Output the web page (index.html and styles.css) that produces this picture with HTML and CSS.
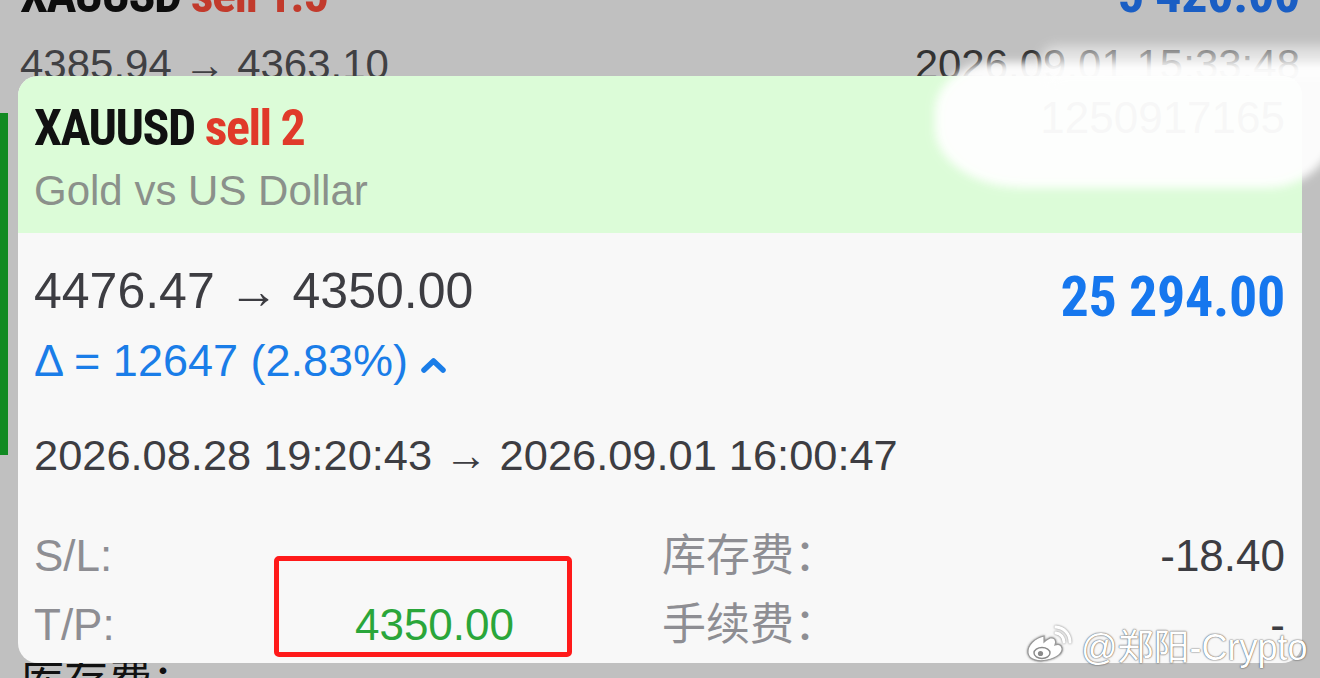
FILE: index.html
```html
<!DOCTYPE html>
<html lang="zh-CN">
<head>
    <meta charset="UTF-8">
    <meta name="viewport" content="width=device-width, initial-scale=1.0">
    <title>XAUUSD sell 2</title>
    <link rel="stylesheet" href="styles.css">
</head>
<body>
    <div class="list">
        <div class="row row-title">
            <span class="symbol">XAUUSD <span class="sell">sell 1.5</span></span>
            <span class="profit">5 420.00</span>
        </div>
        <div class="row row-price">
            <span>4385.94 → 4363.10</span>
            <span>2026.09.01 15:33:48</span>
        </div>
        <div class="mark"></div>
        <div class="row row-fee">
            <span>库存费：</span>
        </div>
    </div>

    <div class="card">
        <div class="card-head">
            <div>
                <div class="title">XAUUSD <span class="sell">sell 2</span></div>
                <div class="subtitle">Gold vs US Dollar</div>
            </div>
            <div class="ticket">1250917165</div>
        </div>
        <div class="card-body">
            <div class="price-row">
                <div class="price">4476.47 → 4350.00</div>
                <div class="amount">25 294.00</div>
            </div>
            <div class="delta">Δ = 12647 (2.83%)<svg class="chevron" width="27" height="17" viewBox="0 0 27 17"><polyline points="4,13 13.5,4 23,13" fill="none" stroke="#1a7de8" stroke-width="5.5" stroke-linecap="round" stroke-linejoin="round"/></svg></div>
            <div class="dates">2026.08.28 19:20:43 → 2026.09.01 16:00:47</div>
            <div class="fields">
                <div class="field"><span class="label">S/L:</span><span class="value">-</span></div>
                <div class="field"><span class="label cjk">库存费：</span><span class="value">-18.40</span></div>
                <div class="field"><span class="label">T/P:</span><span class="value tp">4350.00</span></div>
                <div class="field"><span class="label cjk">手续费：</span><span class="value">-</span></div>
            </div>
        </div>
    </div>

    <div class="smudge"></div>
    <div class="smudge-top"></div>
    <div class="highlight"></div>

    <div class="watermark">
        <svg width="48" height="38" viewBox="0 0 48 38">
            <path d="M19 11 C10 13 2 20 3 28 C4 35 14 37 22 35 C32 33 38 28 37 23 C36 19 33 19 30 20 C32 15 29 12 25 13 C23 14 21 15 19 17 Z" fill="#fff" stroke="#9a9a9a" stroke-width="1.2"/>
            <ellipse cx="17" cy="28" rx="8" ry="5.5" fill="#fff" stroke="#8a8a8a" stroke-width="1.4"/>
            <circle cx="15.5" cy="28.5" r="2.6" fill="#8a8a8a"/>
            <path d="M31 8 A9 9 0 0 1 39 17" fill="none" stroke="#fff" stroke-width="3" stroke-linecap="round"/>
            <path d="M31 2 A15 15 0 0 1 45 17" fill="none" stroke="#fff" stroke-width="3" stroke-linecap="round"/>
        </svg>
        <span>@郑阳-Crypto</span>
    </div>
</body>
</html>
```

FILE: styles.css
```css
body {
    margin: 0;
    height: 678px;
    overflow: hidden;
    background-color: #c0c0c0;
    font-family: "Liberation Sans", Arial, "Noto Sans CJK SC", sans-serif;
    position: relative;
}
.list {
    margin-top: -35px;
    padding: 0 20px;
}
.row {
    display: flex;
    justify-content: space-between;
    line-height: 60px;
}
.row-title {
    font-family: "Liberation Sans Narrow", "Roboto Condensed", "DejaVu Sans Condensed", sans-serif;
    font-weight: 700;
    font-size: 50px;
    letter-spacing: -1.5px;
    color: #0d0d0d;
}
.row-title .sell {
    color: #c23a2c;
}
.row-title .profit {
    font-size: 52px;
    color: #1a5ec4;
    letter-spacing: -0.3px;
}
.row-price {
    margin-top: 10px;
    font-size: 42px;
    color: #404043;
}
.row-price span:last-child {
    color: #333;
}
.mark {
    margin: 18px 0 0 -20px;
    width: 8px;
    height: 342px;
    background-color: #118a22;
}
.row-fee {
    margin-top: 192px;
    font-family: "Noto Sans CJK SC", sans-serif;
    font-size: 44px;
    color: #111;
}

.card {
    position: absolute;
    left: 18px;
    top: 76px;
    width: 1284px;
    height: 587px;
    border-radius: 20px;
    overflow: hidden;
    background-color: #f8f8f8;
}
.card-head {
    height: 157px;
    box-sizing: border-box;
    padding: 22px 17px 0 16px;
    background-color: #dcfcd8;
    display: flex;
    justify-content: space-between;
    align-items: flex-start;
}
.title {
    font-family: "Liberation Sans Narrow", "Roboto Condensed", "DejaVu Sans Condensed", sans-serif;
    font-weight: 700;
    font-size: 50px;
    letter-spacing: -1.5px;
    line-height: 60px;
    color: #111;
}
.title .sell {
    color: #e03a2a;
}
.subtitle {
    font-size: 42px;
    line-height: 66px;
    color: #8b918b;
}
.ticket {
    margin-top: -10px;
    font-size: 44px;
    line-height: 60px;
    color: #666;
}
.card-body {
    padding: 26px 17px 0 16px;
}
.price-row {
    display: flex;
    justify-content: space-between;
    align-items: flex-start;
}
.price {
    font-size: 50px;
    line-height: 64px;
    color: #3d3d42;
}
.amount {
    margin: 6px 0 -6px;
    font-family: "Liberation Sans Narrow", "Roboto Condensed", "DejaVu Sans Condensed", sans-serif;
    font-weight: 700;
    font-size: 56px;
    letter-spacing: -0.3px;
    line-height: 64px;
    color: #1677ee;
}
.delta {
    margin-top: 8px;
    font-size: 45px;
    line-height: 60px;
    color: #1a7de8;
}
.chevron {
    margin-left: 12px;
    vertical-align: 2px;
}
.dates {
    margin-top: 34px;
    font-size: 43.4px;
    line-height: 60px;
    color: #3d3d42;
}
.fields {
    margin-top: 36px;
    display: grid;
    grid-template-columns: 480px 1fr;
    column-gap: 148px;
}
.field {
    display: flex;
    justify-content: space-between;
    align-items: baseline;
    font-size: 44px;
    line-height: 69px;
}
.label {
    color: #8e8e93;
}
.label.cjk {
    font-family: "Noto Sans CJK SC", sans-serif;
    line-height: 61px;
}
.value {
    color: #3d3d42;
}
.value.tp {
    color: #2aa63a;
}

.smudge {
    position: absolute;
    left: 935px;
    top: 62px;
    width: 400px;
    height: 126px;
    border-radius: 60px 0 70px 90px / 50px 0 60px 60px;
    background-color: #fff;
    opacity: 0.95;
    filter: blur(5px);
}
.smudge-top {
    position: absolute;
    left: 1040px;
    top: 46px;
    width: 300px;
    height: 34px;
    border-radius: 40px 0 0 40px;
    background-color: #fff;
    opacity: 0.55;
    filter: blur(6px);
}
.highlight {
    position: absolute;
    left: 274px;
    top: 556px;
    width: 298px;
    height: 101px;
    box-sizing: border-box;
    border: 5px solid #ff1a1a;
    border-radius: 5px;
}
.watermark {
    position: absolute;
    left: 1025px;
    top: 618px;
    display: flex;
    align-items: center;
    gap: 8px;
    font-family: "Liberation Sans", "Noto Sans CJK SC", sans-serif;
    font-size: 36px;
    color: #fff;
    text-shadow: 0 0 2px rgba(0, 0, 0, 0.55), 0 0 1px rgba(0, 0, 0, 0.6);
}
.watermark svg {
    filter: drop-shadow(0 0 1px rgba(0, 0, 0, 0.5));
}
```
